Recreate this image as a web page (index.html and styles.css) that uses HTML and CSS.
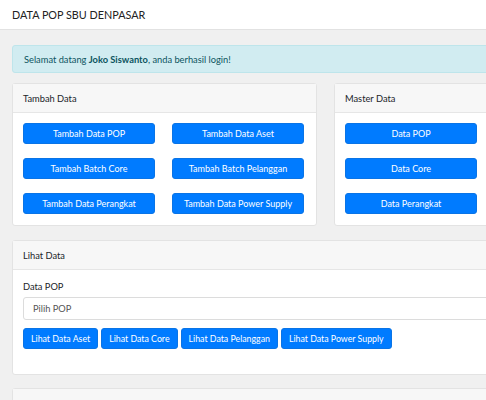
FILE: index.html
```html
<!DOCTYPE html>
<html>
<head>
<meta charset="utf-8">
<link rel="stylesheet" href="styles.css">
</head>
<body>
<header class="topbar">DATA POP SBU DENPASAR</header>
<main class="page">
  <div class="alert"><span>Selamat datang <b>Joko Siswanto</b>, anda berhasil login!</span></div>
  <div class="row">
    <section class="card">
      <div class="card-header">Tambah Data</div>
      <div class="card-body grid2">
        <a class="btn">Tambah Data POP</a>
        <a class="btn">Tambah Data Aset</a>
        <a class="btn">Tambah Batch Core</a>
        <a class="btn">Tambah Batch Pelanggan</a>
        <a class="btn">Tambah Data Perangkat</a>
        <a class="btn">Tambah Data Power Supply</a>
      </div>
    </section>
    <section class="card">
      <div class="card-header">Master Data</div>
      <div class="card-body grid1">
        <a class="btn">Data POP</a>
        <a class="btn">Data Core</a>
        <a class="btn">Data Perangkat</a>
      </div>
    </section>
  </div>
  <section class="card wide">
    <div class="card-header">Lihat Data</div>
    <div class="card-body lihat">
      <label class="label">Data POP</label>
      <div class="select">Pilih POP</div>
      <div class="btn-row">
        <a class="btn sm">Lihat Data Aset</a>
        <a class="btn sm">Lihat Data Core</a>
        <a class="btn sm">Lihat Data Pelanggan</a>
        <a class="btn sm">Lihat Data Power Supply</a>
      </div>
    </div>
  </section>
  <section class="card wide next">
    <div class="card-header"></div>
  </section>
</main>
</body>
</html>
```
FILE: styles.css
```css
html, body {
  margin: 0;
  padding: 0;
  overflow: hidden;
  background: #f0f0f0;
  font-family: "Lato", "Open Sans", sans-serif;
  font-size: 9.3px;
  color: #212529;
}
.topbar {
  height: 30px;
  background: #fff;
  border-bottom: 1px solid #e2e2e2;
  box-sizing: border-box;
  padding-left: 12px;
  display: flex;
  align-items: center;
  font-size: 10.8px;
  color: #222;
}
.page {
  width: 627px;
  padding: 15px 0 0 12px;
  display: flex;
  flex-direction: column;
}
.alert {
  background: #d1ecf1;
  border: 1px solid #bee5eb;
  color: #0c5460;
  height: 28px;
  box-sizing: border-box;
  display: flex;
  align-items: center;
  padding-left: 11px;
  border-radius: 3px;
  margin-bottom: 10px;
}
.alert b { font-weight: 700; }
.row {
  display: flex;
  gap: 17px;
  margin-bottom: 14px;
}
.card {
  background: #fff;
  border: 1px solid #e3e3e3;
  border-radius: 3px;
  width: 305px;
  box-sizing: border-box;
}
.card.wide { width: 627px; margin-bottom: 13px; }
.card-header {
  height: 29px;
  box-sizing: border-box;
  background: #f7f7f7;
  border-bottom: 1px solid #e6e6e6;
  display: flex;
  align-items: center;
  padding-left: 10px;
}
.card-body {
  padding: 10px 10px 11px 10px;
}
.grid2, .grid1 {
  display: grid;
  grid-template-columns: 132px 132px;
  column-gap: 17px;
  row-gap: 14px;
}
.grid1 { grid-template-columns: 132px; }
.btn {
  background: #007bff;
  color: #fff;
  border: 1px solid #0a74e6;
  border-radius: 3px;
  height: 21px;
  box-sizing: border-box;
  display: flex;
  align-items: center;
  justify-content: center;
  white-space: nowrap;
  font-size: 9px;
}
.btn.sm { padding: 0 7px; font-size: 8.8px; }
.lihat {
  display: flex;
  flex-direction: column;
  padding-top: 10px;
  padding-bottom: 25px;
}
.label { margin-bottom: 4px; line-height: 13px; }
.select {
  height: 23px;
  box-sizing: border-box;
  border: 1px solid #dcdcdc;
  border-radius: 3px;
  display: flex;
  align-items: center;
  padding-left: 9px;
  color: #555;
  margin-bottom: 8px;
}
.btn-row {
  display: flex;
  gap: 3px;
}
.next { height: 40px; }
```
